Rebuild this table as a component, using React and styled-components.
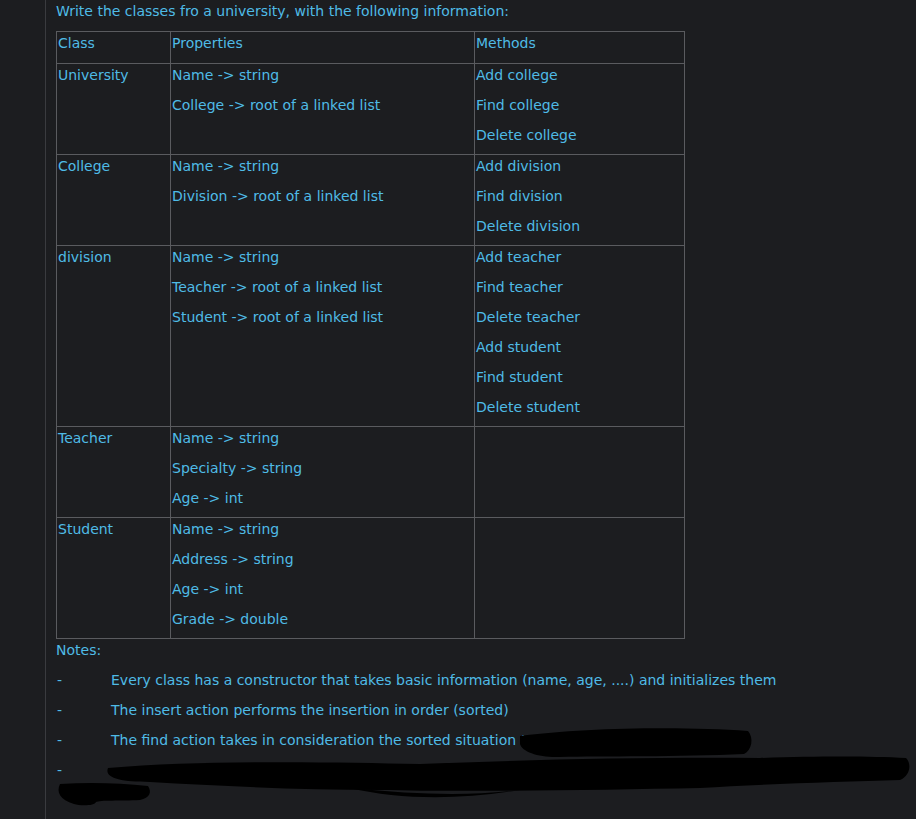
import React from 'react'
import styled, { createGlobalStyle } from 'styled-components'

const GlobalStyle = createGlobalStyle`
  html, body {
    margin: 0;
    padding: 0;
    background: #1c1d20;
  }
  body {
    font-family: "DejaVu Sans", sans-serif;
  }
`

const rows = [
  {
    name: 'University',
    props: ['Name -> string', 'College -> root of a linked list'],
    methods: ['Add college', 'Find college', 'Delete college'],
  },
  {
    name: 'College',
    props: ['Name -> string', 'Division -> root of a linked list'],
    methods: ['Add division', 'Find division', 'Delete division'],
  },
  {
    name: 'division',
    props: ['Name -> string', 'Teacher -> root of a linked list', 'Student -> root of a linked list'],
    methods: ['Add teacher', 'Find teacher', 'Delete teacher', 'Add student', 'Find student', 'Delete student'],
  },
  {
    name: 'Teacher',
    props: ['Name -> string', 'Specialty -> string', 'Age -> int'],
    methods: [],
  },
  {
    name: 'Student',
    props: ['Name -> string', 'Address -> string', 'Age -> int', 'Grade -> double'],
    methods: [],
  },
]

const notes = [
  'Every class has a constructor that takes basic information (name, age, ....) and initializes them',
  'The insert action performs the insertion in order (sorted)',
  'The find action takes in consideration the sorted situation \u2018',
  '',
]

const App = () => {
  return (
    <>
      <GlobalStyle />
      <Page>
        <Content>
          <Para>Write the classes fro a university, with the following information:</Para>
          <Table>
            <colgroup>
              <col style={{ width: 114 }} />
              <col style={{ width: 304 }} />
              <col style={{ width: 210 }} />
            </colgroup>
            <tbody>
              <tr>
                <Cell $head><Para>Class</Para></Cell>
                <Cell $head><Para>Properties</Para></Cell>
                <Cell $head><Para>Methods</Para></Cell>
              </tr>
              {rows.map((r) => (
                <tr key={r.name}>
                  <Cell><Para>{r.name}</Para></Cell>
                  <Cell>
                    {r.props.map((p) => <Para key={p}>{p}</Para>)}
                  </Cell>
                  <Cell>
                    {r.methods.map((m) => <Para key={m}>{m}</Para>)}
                  </Cell>
                </tr>
              ))}
            </tbody>
          </Table>
          <Para>Notes:</Para>
          {notes.map((n, i) => (
            <NoteRow key={i}>
              <Dash>-</Dash>
              <span>{n}</span>
            </NoteRow>
          ))}
        </Content>
        <Redactions width="916" height="819" viewBox="0 0 916 819">
          <path d="M520 736 C580 728 680 726 748 731 C754 738 752 750 744 754 C680 757 600 756 560 757 C540 758 522 752 520 744 Z" fill="#000" />
          <path d="M108 768 C200 760 330 762 420 764 C520 760 640 757 760 758 C820 756 870 756 906 758 C912 764 910 776 900 780 C840 782 760 784 700 788 C600 790 470 792 380 790 C300 790 220 786 150 782 C120 782 104 778 108 768 Z" fill="#000" />
          <path d="M60 784 C90 782 120 783 148 786 C152 792 150 798 140 800 C120 801 100 800 96 802 C95 806 80 806 74 804 C60 800 56 792 60 784 Z" fill="#000" />
          <path d="M350 788 C420 795 470 796 520 790 C460 800 400 800 350 788 Z" fill="#000" />
        </Redactions>
      </Page>
    </>
  )
}

export default App

const Page = styled.div`
  position: relative;
  min-height: 819px;
  width: 916px;
  overflow: hidden;
  background: #1c1d20;
`

const Content = styled.div`
  margin-left: 45px;
  border-left: 1px solid #3a3b3f;
  min-height: 819px;
  padding-left: 10px;
  color: #4fbbe6;
  font-size: 14px;
`

const Para = styled.p`
  margin: 0 0 8px 0;
  line-height: 22px;
  white-space: nowrap;
`

const Table = styled.table`
  border-collapse: collapse;
  table-layout: fixed;
  width: 628px;
  margin-top: 9px;
  margin-bottom: 0;
  border: 1px solid #6b6c70;
`

const Cell = styled.td`
  border: 1px solid #5a5b5f;
  vertical-align: top;
  padding: 0 0 ${(p) => (p.$head ? '1px' : '0')} 1px;
`

const NoteRow = styled.div`
  display: flex;
  line-height: 22px;
  margin-bottom: 8px;
  white-space: nowrap;
`

const Dash = styled.span`
  width: 54px;
  flex: none;
  padding-left: 1px;
`

const Redactions = styled.svg`
  position: absolute;
  left: 0;
  top: 0;
  pointer-events: none;
`
